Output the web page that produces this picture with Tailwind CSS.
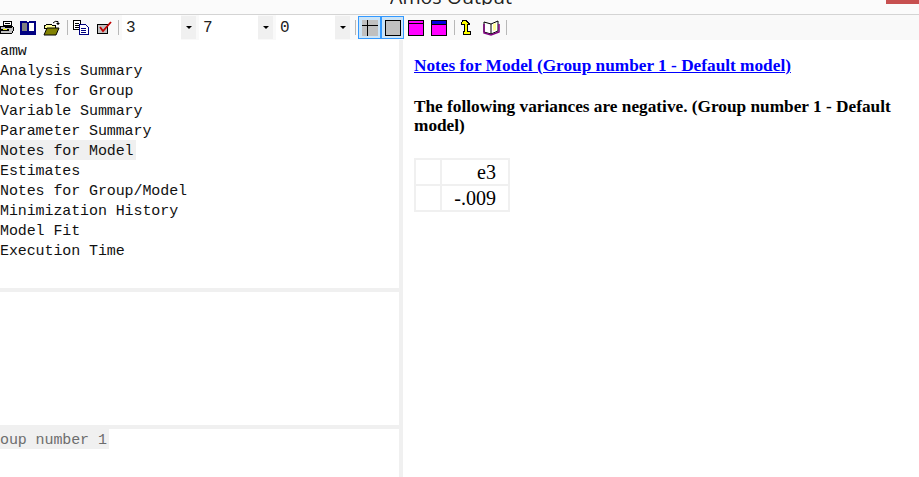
<!DOCTYPE html>
<html lang="en">
<head>
  <meta charset="UTF-8">
  <title>Amos Output</title>
  <script src="https://cdn.jsdelivr.net/npm/@tailwindcss/browser@4"></script>
</head>
<body class="bg-white">
  <div class="w-[919px] h-[477px] flex flex-col overflow-hidden">

    <!-- title bar, cut off by the top of the capture -->
    <div class="h-[15px] shrink-0 flex bg-[#fbfbfb] border-b border-[#d4d4d4] overflow-hidden">
      <div class="w-[390px] shrink-0"></div>
      <div class="h-[5px] overflow-hidden">
        <div class="-mt-[17px] h-[27px] leading-[27px] text-[19.6px] text-[#222] font-['Open_Sans',sans-serif] whitespace-nowrap">Amos Output</div>
      </div>
      <div class="ml-auto w-[33px] h-[4px] bg-[#c75050]"></div>
    </div>

    <!-- toolbar -->
    <div class="h-[25px] shrink-0 flex bg-[#f9f9f9]">
      <div class="w-[122px] shrink-0 flex items-center">
        <!-- printer -->
        <svg class="w-[14px] h-[15px] shrink-0" viewBox="0 0 14 15" shape-rendering="crispEdges">
          <path d="M3 1h8v4H3z" fill="#fff" stroke="#000"/>
          <path d="M0 6h12l1 1v4l-1 2H0z" fill="#c0c0c0" stroke="#000"/>
          <path d="M0 9h9v2H0z" fill="#000"/>
          <path d="M3 9h4v1H3z" fill="#ff0"/>
          <path d="M5 3h5M5 7h7" stroke="#000"/>
        </svg>
        <!-- open book -->
        <svg class="w-[16px] h-[14px] ml-[6px] shrink-0" viewBox="0 0 16 14" shape-rendering="crispEdges">
          <path d="M1 1h6l1 1v10l-1-1H1z" fill="#808080" stroke="#000080" stroke-width="1.400"/>
          <path d="M15 1H9L8 2v10l1-1h6z" fill="#fff" stroke="#000080" stroke-width="1.400"/>
          <path d="M0 12h16v1.500H0z" fill="#000080"/>
        </svg>
        <!-- open folder -->
        <svg class="w-[17px] h-[16px] ml-[7px] shrink-0" viewBox="0 0 17 16">
          <path d="M1 5h2l1-1h4l1 1h3v3H1z" fill="#ffff99" stroke="#000" shape-rendering="crispEdges"/>
          <path d="M1 15l3-7h12l-3 7z" fill="#808000" stroke="#000"/>
          <path d="M10 3q2-2.500 5-1.500v3" fill="none" stroke="#000"/>
          <path d="M13 3h4l-2 2z" fill="#000"/>
        </svg>
        <div class="w-px h-[15px] ml-[7px] bg-[#b8b8b8] shrink-0"></div>
        <!-- copy -->
        <svg class="w-[16px] h-[15px] ml-[5px] shrink-0" viewBox="0 0 16 15" shape-rendering="crispEdges">
          <path d="M.5.5h7v9h-7z" fill="#fff" stroke="#000"/>
          <path d="M2 3h4M2 5h4M2 7h4" stroke="#000"/>
          <path d="M6.500 4.500h6l2.500 2.500v7.500H6.500z" fill="#fff" stroke="#000080"/>
          <path d="M8 8h5M8 10h5M8 12h5" stroke="#000080"/>
        </svg>
        <!-- checked box -->
        <svg class="w-[15px] h-[14px] ml-[8px] shrink-0" viewBox="0 0 15 14">
          <path d="M.5 3.500h10v9H.5z" fill="#c0c0c0" stroke="#000" shape-rendering="crispEdges"/>
          <path d="M3 6l3 4 8-9" fill="none" stroke="#c00000" stroke-width="1.800"/>
        </svg>
        <div class="w-px h-[15px] ml-[6px] bg-[#b8b8b8] shrink-0"></div>
      </div>

      <div class="w-[59px] shrink-0 bg-white pl-1 font-['Liberation_Mono',monospace] text-[16px] leading-[26px] text-[#222]">3</div>
      <div class="w-[15px] h-[23px] mt-px shrink-0 bg-[#f0f0f0] flex items-center justify-center">
        <div class="w-0 h-0 border-x-[3px] border-x-transparent border-t-[3px] border-t-black"></div>
      </div>
      <div class="w-[3px] shrink-0"></div>
      <div class="w-[59px] shrink-0 bg-white pl-1 font-['Liberation_Mono',monospace] text-[16px] leading-[26px] text-[#222]">7</div>
      <div class="w-[15px] h-[23px] mt-px shrink-0 bg-[#f0f0f0] flex items-center justify-center">
        <div class="w-0 h-0 border-x-[3px] border-x-transparent border-t-[3px] border-t-black"></div>
      </div>
      <div class="w-[3px] shrink-0"></div>
      <div class="w-[59px] shrink-0 bg-white pl-1 font-['Liberation_Mono',monospace] text-[16px] leading-[26px] text-[#222]">0</div>
      <div class="w-[15px] h-[23px] mt-px shrink-0 bg-[#f0f0f0] flex items-center justify-center">
        <div class="w-0 h-0 border-x-[3px] border-x-transparent border-t-[3px] border-t-black"></div>
      </div>

      <div class="flex-1 flex items-center">
        <div class="w-px h-[15px] ml-[5px] bg-[#b8b8b8] shrink-0"></div>
        <!-- toggled buttons -->
        <div class="w-[23px] h-[23px] ml-[2px] shrink-0 bg-[#cce4f7] border border-[#3399ff] flex items-center justify-center">
          <svg class="w-[16px] h-[16px]" viewBox="0 0 16 16" shape-rendering="crispEdges">
            <path d="M0 0h16v16H0z" fill="#c0c0c0"/>
            <path d="M0 5.500h16M5.500 0v16" stroke="#000"/>
          </svg>
        </div>
        <div class="w-[23px] h-[23px] shrink-0 bg-[#cce4f7] border border-[#3399ff] flex items-center justify-center">
          <svg class="w-[16px] h-[16px]" viewBox="0 0 16 16" shape-rendering="crispEdges">
            <path d="M.5.500h15v15H.5z" fill="#c0c0c0" stroke="#000"/>
          </svg>
        </div>
        <!-- magenta panes -->
        <svg class="w-[16px] h-[16px] ml-[4px] shrink-0" viewBox="0 0 16 16" shape-rendering="crispEdges">
          <path d="M.5.500h15v15H.5z" fill="#ff00ff" stroke="#000"/>
          <path d="M1 3.500h14" stroke="#000"/>
        </svg>
        <svg class="w-[16px] h-[16px] ml-[7px] shrink-0" viewBox="0 0 16 16" shape-rendering="crispEdges">
          <path d="M.5.500h15v15H.5z" fill="#ff00ff" stroke="#000"/>
          <path d="M1 1h14v3H1z" fill="#0000e0"/>
          <path d="M1 4.500h14" stroke="#000"/>
        </svg>
        <div class="w-px h-[15px] ml-[7px] bg-[#b8b8b8] shrink-0"></div>
        <!-- up arrow -->
        <svg class="w-[11px] h-[15px] ml-[6px] shrink-0" viewBox="0 0 11 15" shape-rendering="crispEdges">
          <path d="M2 .5h3l3 3v1H6v7h3v3H2v-3h1v-7H0v-1z" fill="#ffff00" stroke="#000"/>
        </svg>
        <!-- help book -->
        <svg class="w-[17px] h-[16px] ml-[11px] shrink-0" viewBox="0 0 17 16">
          <path d="M1 2l7 2 7-3v10l-7 3-7-2z" fill="#fff" stroke="#000"/>
          <path d="M8 4v10" stroke="#000"/>
          <path d="M10 4l3-1v7l-3 1z" fill="#ffff99"/>
          <path d="M1 4v9l7 2 8-3V4" fill="none" stroke="#800080" stroke-width="1.500"/>
        </svg>
        <div class="w-px h-[15px] ml-[6px] bg-[#b8b8b8] shrink-0"></div>
      </div>
    </div>

    <div class="flex-1 flex min-h-0">
      <!-- left panes -->
      <div class="w-[399px] shrink-0 flex flex-col font-['Liberation_Mono',monospace] text-[15px] leading-[24px] tracking-[-0.1px] text-[#111]">
        <div class="h-[248px] shrink-0">
          <div class="h-5">amw</div>
          <div class="h-5">Analysis Summary</div>
          <div class="h-5">Notes for Group</div>
          <div class="h-5">Variable Summary</div>
          <div class="h-5">Parameter Summary</div>
          <div class="h-5 w-[136px] bg-[#f0f0f0]">Notes for Model</div>
          <div class="h-5">Estimates</div>
          <div class="h-5">Notes for Group/Model</div>
          <div class="h-5">Minimization History</div>
          <div class="h-5">Model Fit</div>
          <div class="h-5">Execution Time</div>
        </div>
        <div class="h-[4px] shrink-0 bg-[#f0f0f0]"></div>
        <div class="h-[133px] shrink-0"></div>
        <div class="h-[4px] shrink-0 bg-[#f0f0f0]"></div>
        <div class="flex-1">
          <div class="h-5 w-[109px] bg-[#f0f0f0] text-[#6d6d6d] whitespace-nowrap">oup number 1</div>
        </div>
      </div>
      <div class="w-[4px] shrink-0 bg-[#f0f0f0]"></div>

      <!-- notes -->
      <div class="flex-1 pl-[11px] pt-[16px] font-['Liberation_Serif',serif] text-black">
        <a href="#" class="block text-[17.28px] leading-[19px] font-bold text-[#0000ff] underline">Notes for Model (Group number 1 - Default model)</a>
        <p class="mt-[22px] w-[490px] text-[17.28px] leading-[19px] font-bold">The following variances are negative. (Group number 1 - Default model)</p>
        <div class="mt-[23px] w-[96px] h-[54px] grid grid-cols-[24px_1fr] grid-rows-2 gap-[2px] p-[2px] bg-[#f0f0f0] text-[20px] leading-[25px]">
          <div class="bg-white"></div>
          <div class="bg-white text-right pr-[12px]">e3</div>
          <div class="bg-white"></div>
          <div class="bg-white text-right pr-[12px]">-.009</div>
        </div>
      </div>
    </div>
  </div>
</body>
</html>
